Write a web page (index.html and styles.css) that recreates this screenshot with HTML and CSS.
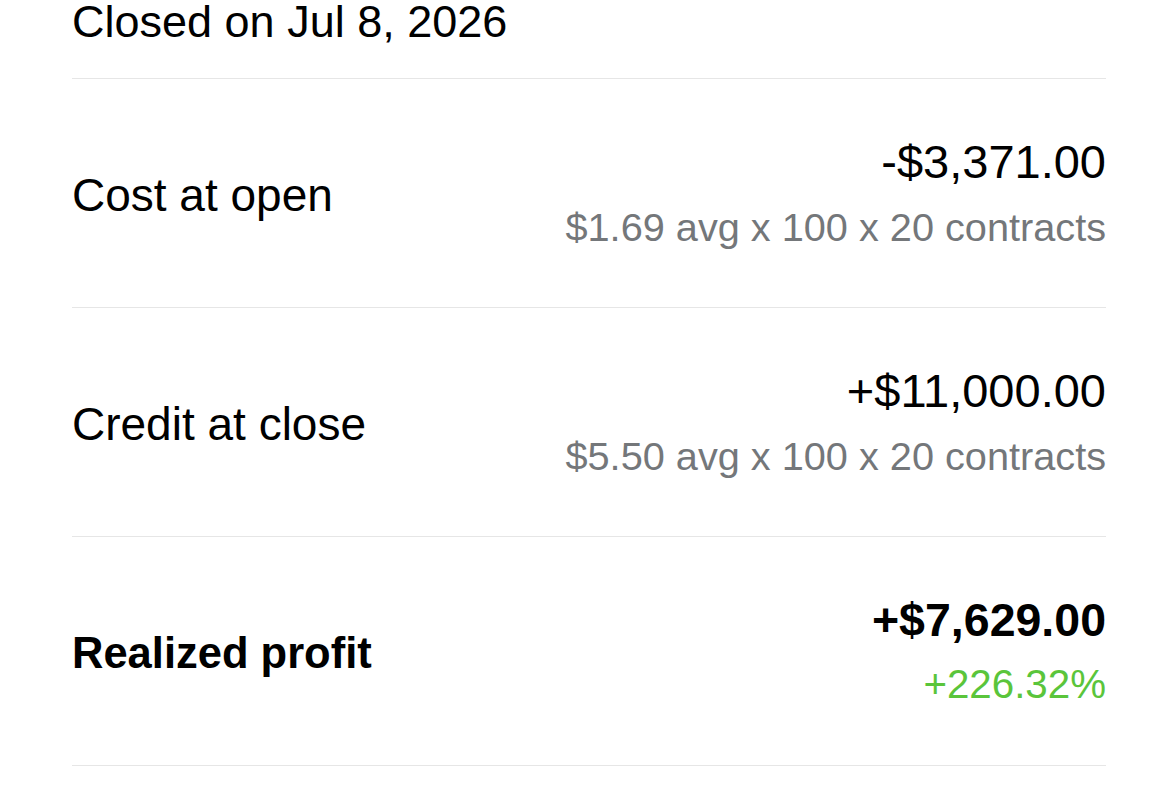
FILE: index.html
```html
<!DOCTYPE html>
<html lang="en">
    <head>
        <meta charset="UTF-8">
        <meta name="viewport" content="width=device-width,initial-scale=1.0">
        <title>Position detail</title>
        <link rel="stylesheet" href="styles.css">
    </head>
    <body>
        <div class="container">
            <div class="closed">Closed on Jul 8, 2026</div>

            <div class="row">
                <div class="label">Cost at open</div>
                <div class="values">
                    <div class="amount">-$3,371.00</div>
                    <div class="sub">$1.69 avg x 100 x 20 contracts</div>
                </div>
            </div>

            <div class="row">
                <div class="label">Credit at close</div>
                <div class="values">
                    <div class="amount">+$11,000.00</div>
                    <div class="sub">$5.50 avg x 100 x 20 contracts</div>
                </div>
            </div>

            <div class="row total">
                <div class="label">Realized profit</div>
                <div class="values">
                    <div class="amount">+$7,629.00</div>
                    <div class="sub gain">+226.32%</div>
                </div>
            </div>
        </div>
    </body>
</html>
```

FILE: styles.css
```css
body {
    font-family: "Liberation Sans", Arial, sans-serif;
    margin: 0;
    background: #ffffff;
    color: #000000;
}

.container {
    margin: 0 48px 0 72px;
}

.closed {
    font-size: 45px;
    line-height: 44px;
    padding-bottom: 34px;
    border-bottom: 1px solid #e6e6e6;
}

.row {
    display: flex;
    justify-content: space-between;
    align-items: center;
    height: 228px;
    border-bottom: 1px solid #e6e6e6;
}

.label {
    font-size: 46px;
    line-height: 50px;
    padding-top: 4px;
}

.values {
    text-align: right;
}

.amount {
    font-size: 47px;
    line-height: 64px;
    padding-top: 4px;
}

.sub {
    font-size: 39.7px;
    line-height: 66px;
    color: #74777a;
}

.total .label,
.total .amount {
    font-weight: bold;
}

.total .label {
    font-size: 43.5px;
}

.total .amount {
    font-size: 46.5px;
}

.sub.gain {
    color: #5ac53b;
    font-size: 40.3px;
}
```
